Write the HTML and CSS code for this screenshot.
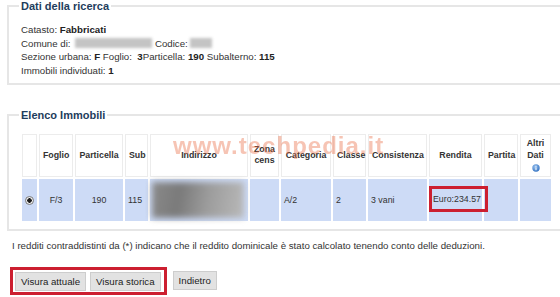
FILE: index.html
```html
<!DOCTYPE html>
<html lang="it">
<head>
<meta charset="utf-8">
<title>Visura</title>
<link rel="stylesheet" href="styles.css">
</head>
<body>
<fieldset class="box">
  <legend>Dati della ricerca</legend>
  <div class="info">
    <div>Catasto: <b>Fabbricati</b></div>
    <div>Comune di: <span class="blur b-comune"></span> Codice: <span class="blur b-codice"></span></div>
    <div>Sezione urbana: <b>F</b> Foglio: &nbsp;<b>3</b>Particella: <b>190</b> Subalterno: <b>115</b></div>
    <div>Immobili individuati: <b>1</b></div>
  </div>
</fieldset>

<fieldset class="box list">
  <legend>Elenco Immobili</legend>
  <div class="grid-wrap">
    <table class="grid">
      <thead>
        <tr>
          <th class="c-sel"></th>
          <th class="c-fog">Foglio</th>
          <th class="c-par">Particella</th>
          <th class="c-sub">Sub</th>
          <th class="c-ind">Indirizzo</th>
          <th class="c-zon">Zona<br>cens</th>
          <th class="c-cat">Categoria</th>
          <th class="c-cla">Classe</th>
          <th class="c-con">Consistenza</th>
          <th class="c-ren">Rendita</th>
          <th class="c-pta">Partita</th>
          <th class="c-alt">Altri<br>Dati<br><svg class="info-ico" width="8" height="8" viewBox="0 0 8 8"><defs><radialGradient id="ig" cx="0.4" cy="0.35" r="0.7"><stop offset="0" stop-color="#9cc4f0"/><stop offset="1" stop-color="#2f6fc0"/></radialGradient></defs><circle cx="4" cy="4" r="3.7" fill="url(#ig)"/><rect x="3.5" y="3.4" width="1" height="2.8" fill="#fff"/><rect x="3.5" y="1.8" width="1" height="1" fill="#fff"/></svg></th>
        </tr>
      </thead>
      <tbody>
        <tr>
          <td class="center"><span class="radio"></span></td>
          <td class="center">F/3</td>
          <td class="center">190</td>
          <td>115</td>
          <td class="addr"><div class="addr-blur"></div></td>
          <td></td>
          <td>A/2</td>
          <td>2</td>
          <td>3 vani</td>
          <td class="rendita"><span class="mark">Euro:234.57</span></td>
          <td></td>
          <td></td>
        </tr>
      </tbody>
    </table>
    <span class="watermark">www.techpedia.it</span>
  </div>
</fieldset>

<p class="note">I redditi contraddistinti da (*) indicano che il reddito dominicale è stato calcolato tenendo conto delle deduzioni.</p>

<div class="actions">
  <div class="highlight">
    <button class="btn">Visura attuale</button>
    <button class="btn">Visura storica</button>
  </div>
  <button class="btn back">Indietro</button>
</div>
</body>
</html>
```

FILE: styles.css
```css
html, body {
  margin: 0;
  padding: 0;
  overflow: hidden;
  background: #fff;
}

body {
  font-family: "Liberation Sans", Arial, sans-serif;
  font-size: 9.7px;
  color: #333;
}

b {
  color: #222;
}

.box {
  margin: 0 -40px 0 7px;
  border: 2px solid #e6e6e6;
  padding: 11px 10px 5px 10px;
  min-width: 0;
}

.box legend {
  padding: 0 2px;
  font-family: "Liberation Sans", Arial, sans-serif;
  font-weight: bold;
  font-size: 11px;
  line-height: 12px;
  color: #1e3d5c;
}

.info {
  padding-left: 2px;
  line-height: 13.7px;
}

.blur {
  display: inline-block;
  vertical-align: middle;
  height: 10px;
  margin-top: -2px;
  background: #c4c4c4;
  filter: blur(1.5px);
}

.b-comune {
  width: 77px;
  margin-left: 2px;
}

.b-codice {
  width: 22px;
}

.list {
  margin-top: 24px;
  padding: 11px 10px 6px 10px;
}

.grid-wrap {
  position: relative;
  margin-left: 1px;
}

.grid {
  table-layout: fixed;
  width: 533px;
  border-collapse: separate;
  border-spacing: 2px;
  background: #fff;
  font-size: 8.8px;
}

.grid th,
.grid td {
  box-sizing: border-box;
  padding: 0 3px;
  vertical-align: middle;
}

.grid th {
  height: 43px;
  background: #fff;
  border: 1px solid #ececec;
  font-weight: bold;
  color: #333;
  text-align: center;
  line-height: 11.5px;
}

.grid td {
  height: 42px;
  background: #cddbf6;
  color: #333;
  text-align: left;
}

.grid td.center {
  text-align: center;
}

.c-sel { width: 15px; }
.c-fog { width: 34px; }
.c-par { width: 48px; }
.c-sub { width: 23px; }
.c-ind { width: 98px; }
.c-zon { width: 29px; }
.c-cat { width: 50px; }
.c-cla { width: 33px; }
.c-con { width: 59px; }
.c-ren { width: 53px; }
.c-pta { width: 34px; }
.c-alt { width: 31px; }

.grid th.c-sel,
.grid th.c-alt,
.grid th.c-zon {
  padding: 0;
}

.info-ico {
  display: inline-block;
  margin-top: 3px;
  vertical-align: top;
}

.radio {
  display: inline-block;
  width: 9px;
  height: 9px;
  box-sizing: border-box;
  border: 1px solid #7d7d7d;
  border-radius: 50%;
  background: radial-gradient(circle, #1e1e1e 0 2px, #f4f4f4 2.5px, #dcdcdc 100%);
  vertical-align: middle;
}

.grid td.addr {
  padding: 2px 1px 2px 2px;
}

.addr-blur {
  height: 36px;
  width: 92px;
  background: linear-gradient(100deg, #8a8a8a 0%, #7a7a7a 30%, #9c9c9c 60%, #b9b9b9 100%);
  filter: blur(3px);
}

.grid td.rendita {
  padding: 0;
}

.mark {
  display: inline-block;
  border: 3px solid #cc1f30;
  padding: 4px 4px 4px 1px;
  line-height: 12px;
  margin-bottom: 1px;
}

.watermark {
  position: absolute;
  left: 153px;
  top: 2px;
  font-family: "Liberation Sans", Arial, sans-serif;
  font-weight: bold;
  font-size: 24px;
  line-height: 24px;
  letter-spacing: 1px;
  color: #ea6d45;
  opacity: 0.4;
  pointer-events: none;
}

.note {
  margin: 8px 0 0 12px;
  line-height: 13.7px;
}

.actions {
  display: flex;
  align-items: center;
  margin: 14px 0 0 10px;
}

.highlight {
  display: flex;
  gap: 4px;
  border: 3px solid #cc1f30;
  padding: 2px 3px 1px 2px;
}

.btn {
  height: 19px;
  padding: 0 5px;
  margin: 0;
  border: 1px solid #cdcdcd;
  background: #e2e2e2;
  font-family: "Liberation Sans", Arial, sans-serif;
  font-size: 9.7px;
  color: #222;
  border-radius: 0;
}

.back {
  margin-left: 6px;
}
```
